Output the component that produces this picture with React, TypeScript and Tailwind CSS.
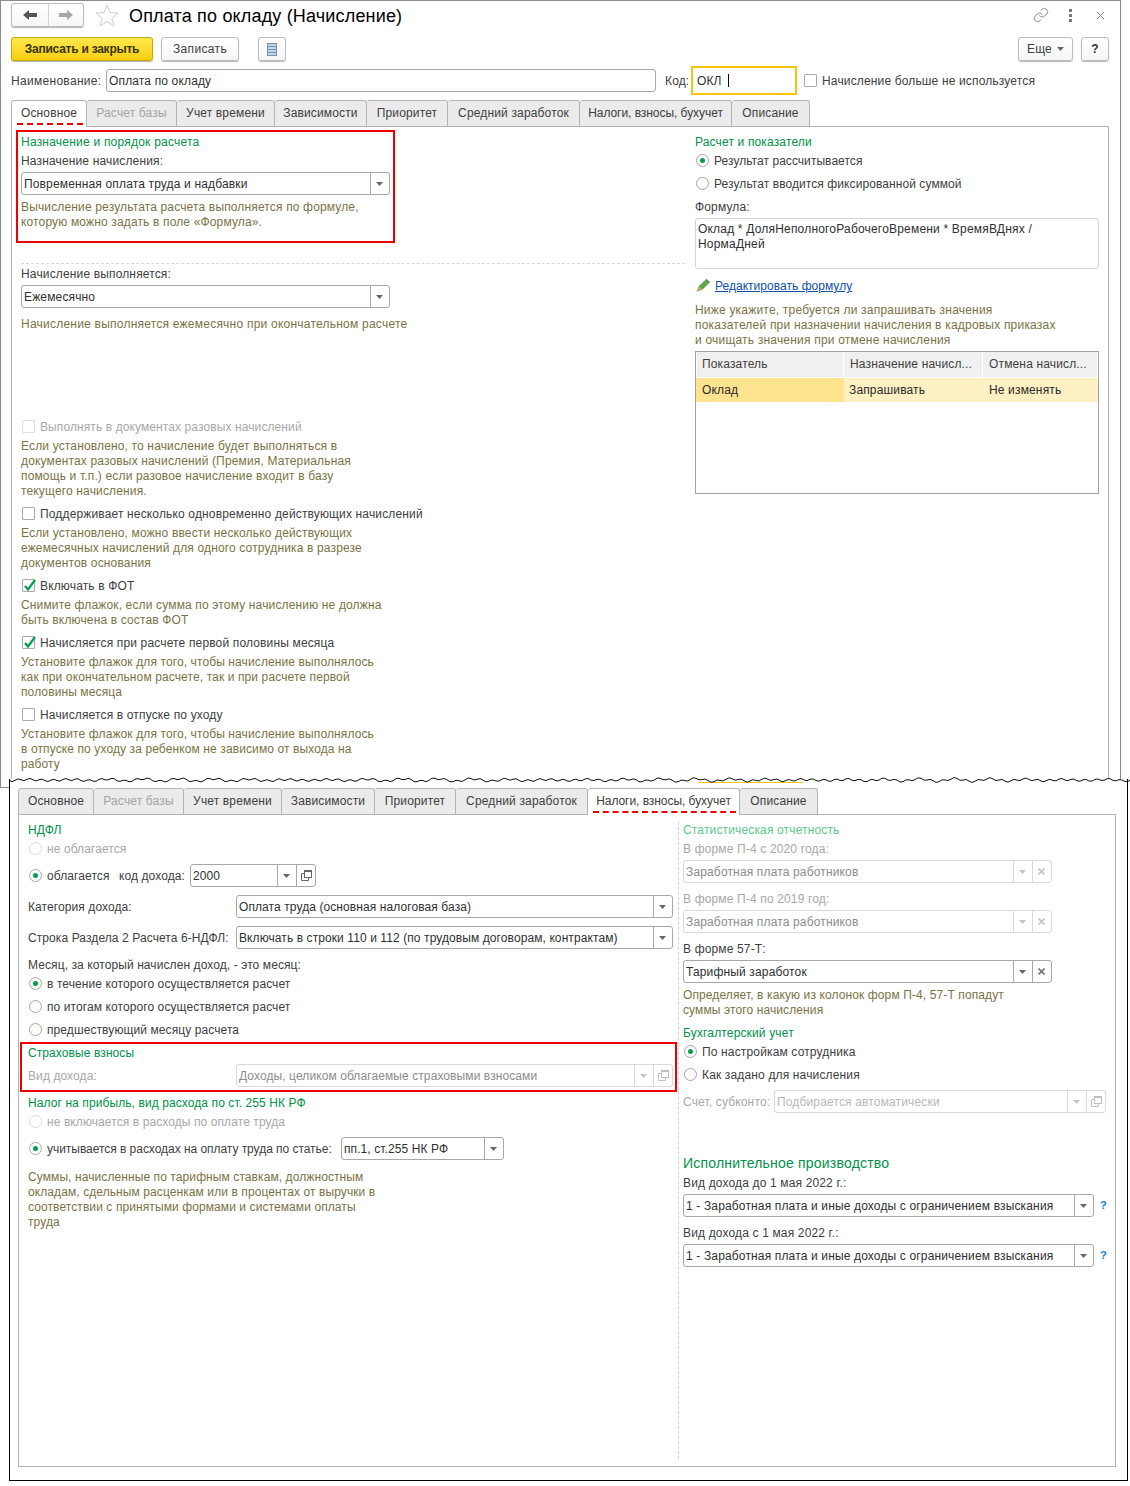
import { Link } from "lucide-react";
import type { ReactNode } from "react";

const TABS = [
  { label: "Основное", width: "w-[76px]", wideWidth: "w-[76px]", fit: "" },
  { label: "Расчет базы", width: "w-[90px]", wideWidth: "w-[90px]", fit: "", off: true },
  { label: "Учет времени", width: "w-[98px]", wideWidth: "w-[98px]", fit: "" },
  { label: "Зависимости", width: "w-[92px]", wideWidth: "w-[93px]", fit: "" },
  { label: "Приоритет", width: "w-[81px]", wideWidth: "w-[81px]", fit: "" },
  { label: "Средний заработок", width: "w-[132px]", wideWidth: "w-[132px]", fit: "" },
  { label: "Налоги, взносы, бухучет", width: "w-[152px]", wideWidth: "w-[152px]", fit: "tracking-[-0.05px]" },
  { label: "Описание", width: "w-[78px]", wideWidth: "w-[78px]", fit: "" }
];

function wavePath() {
  let d = "M0 3";
  for (let x = 3; x <= 1122; x += 3) {
    const y = 3 + Math.sin(x * 0.53) * 1.1 + Math.sin(x * 0.17 + 1) * 0.9 + Math.sin(x * 1.9) * 0.5;
    d += ` L${x} ${y.toFixed(1)}`;
  }
  return d;
}

function Tabs({ active, row }: { active: number; row: "top" | "bottom" }) {
  return (
    <div className="relative z-10 -mb-px flex h-[27px]">
      {TABS.map((tab, i) => (
        <div
          key={tab.label}
          className={`relative flex h-[27px] items-center justify-center rounded-t-[3px] border border-l-0 border-[#b4b4b4] first:border-l ${
            row === "top" ? tab.width : tab.wideWidth
          } ${i === active ? "border-b-0 bg-white pb-px" : "bg-[#ebebeb]"} ${tab.off ? "text-[#a3a3a3]" : ""} ${tab.fit}`}
        >
          {tab.label}
          {i === active ? (
            <span className="absolute left-[5px] right-[3px] top-[22px] border-t-2 border-dashed border-[#f00000]" />
          ) : null}
        </div>
      ))}
    </div>
  );
}

function Label({ children, className = "" }: { children: ReactNode; className?: string }) {
  return <div className={`translate-y-px ${className}`}>{children}</div>;
}

function Heading({ children, light }: { children: ReactNode; light?: boolean }) {
  return <div className={`h-[15px] translate-y-px ${light ? "text-[#5cc98b]" : "text-[#00914a]"}`}>{children}</div>;
}

function Hint({ children, className = "mt-1" }: { children: ReactNode; className?: string }) {
  return <div className={`translate-y-px text-[#7b7345] ${className}`}>{children}</div>;
}

function Radio({ on, off, label, className = "mt-2" }: { on?: boolean; off?: boolean; label?: string; className?: string }) {
  return (
    <div className={`flex h-[15px] items-center ${className} ${off ? "text-[#a8a8a8]" : ""}`}>
      <span
        className={`ml-px mr-[5px] flex size-[13px] shrink-0 items-center justify-center rounded-full border bg-white ${
          off ? "border-[#dcdcdc]" : "border-[#a6a6a6]"
        }`}
      >
        {on ? <span className="size-[5px] rounded-full bg-[#00a04f]" /> : null}
      </span>
      <span className="translate-y-px">{label}</span>
    </div>
  );
}

function Check({ on, off, label, className = "mt-2" }: { on?: boolean; off?: boolean; label: string; className?: string }) {
  return (
    <div className={`flex h-[15px] items-center ${className} ${off ? "text-[#a8a8a8]" : ""}`}>
      <span
        className={`ml-px mr-[5px] size-[13px] shrink-0 rounded-[1px] border bg-white ${
          off ? "border-[#dedede]" : "border-[#ababab]"
        }`}
      >
        {on ? (
          <svg width="13" height="13" viewBox="0 0 13 13" className="overflow-visible">
            <path d="M2 6 L5 9.5 L12 0" fill="none" stroke="#00a04f" strokeWidth="2.2" />
          </svg>
        ) : null}
      </span>
      <span className="translate-y-px">{label}</span>
    </div>
  );
}

function Caret({ off }: { off?: boolean }) {
  return (
    <svg width="7" height="4" viewBox="0 0 7 4">
      <path d="M0 0 H7 L3.5 4 Z" fill={off ? "#c4c4c4" : "#666"} />
    </svg>
  );
}

function OpenIcon({ off }: { off?: boolean }) {
  const c = off ? "#c0c0c0" : "#666";
  return (
    <svg width="11" height="11" viewBox="0 0 11 11" fill="none">
      <path d="M0.5 3.5 H3 M0.5 3.5 V10.5 H7.5 V8" stroke={c} />
      <rect x="3.5" y="0.5" width="7" height="7" stroke={c} />
      <path d="M3.5 1.5 H10.5" stroke={c} />
    </svg>
  );
}

function CrossIcon({ off }: { off?: boolean }) {
  return (
    <svg width="7" height="7" viewBox="0 0 7 7">
      <path d="M0.5 0.5 L6.5 6.5 M6.5 0.5 L0.5 6.5" stroke={off ? "#c4c4c4" : "#777"} strokeWidth="1.6" />
    </svg>
  );
}

function Select({
  text,
  width,
  extra,
  off,
  faint,
  className = ""
}: {
  text: string;
  width: string;
  extra?: "open" | "clear";
  off?: boolean;
  faint?: boolean;
  className?: string;
}) {
  const line = off ? "border-[#dadada]" : "border-[#a8a8a8]";
  return (
    <div className={`flex h-[23px] shrink-0 rounded-[3px] border bg-white ${width} ${line} ${className}`}>
      <div
        className={`min-w-0 flex-1 translate-y-px self-center overflow-hidden pl-[2px] whitespace-nowrap ${
          faint ? "text-[#b8b8b8]" : off ? "text-[#8c8c8c]" : "text-[#303030]"
        }`}
      >
        {text}
      </div>
      <div className={`flex w-[19px] items-center justify-center border-l pr-[2px] ${line}`}>
        <Caret off={off} />
      </div>
      {extra ? (
        <div className={`flex w-[19px] items-center justify-center border-l ${extra === "clear" ? "pr-[2px]" : ""} ${line}`}>
          {extra === "open" ? <OpenIcon off={off} /> : <CrossIcon off={off} />}
        </div>
      ) : null}
    </div>
  );
}

function Button({ children, width, className = "" }: { children: ReactNode; width: string; className?: string }) {
  return (
    <div
      className={`flex h-[24px] items-center justify-center rounded-[3px] border border-[#bcbcbc] bg-gradient-to-b from-white to-[#f6f6f6] shadow-[0_1px_1px_#b5b5b5] ${width} ${className}`}
    >
      {children}
    </div>
  );
}

function TopWindow() {
  return (
    <div className="h-[788px] w-[1121px] border border-[#8c8c8c]">
      <div className="flex h-[28px] items-center pl-[10px] pr-[12px]">
        <div className="flex h-[24px] w-[73px] rounded-[3px] border border-[#bcbcbc] bg-gradient-to-b from-white to-[#f6f6f6] shadow-[0_1px_1px_#b5b5b5]">
          <div className="flex w-[37px] items-center justify-center border-r border-[#d4d4d4]">
            <svg width="14" height="10" viewBox="0 0 14 10">
              <path d="M0 5 L6 0 V3 H14 V7 H6 V10 Z" fill="#555" />
            </svg>
          </div>
          <div className="flex flex-1 items-center justify-center">
            <svg width="14" height="10" viewBox="0 0 14 10">
              <path d="M14 5 L8 0 V3 H0 V7 H8 V10 Z" fill="#a6a6a6" />
            </svg>
          </div>
        </div>
        <svg width="24" height="23" viewBox="0 0 24 23" className="ml-[11px]">
          <path
            d="M12 1 L15 8.6 L23 9 L16.8 14.2 L18.9 22 L12 17.6 L5.1 22 L7.2 14.2 L1 9 L9 8.6 Z"
            fill="none"
            stroke="#c8ced4"
          />
        </svg>
        <div className="ml-[10px] translate-y-px whitespace-nowrap text-[18px] leading-[22px] tracking-[0.17px] text-black">
          Оплата по окладу (Начисление)
        </div>
        <Link size={16} strokeWidth={1.3} color="#7a7a7a" className="ml-auto" />
        <div className="ml-[20px] flex flex-col gap-[2px]">
          <span className="size-[3px] bg-[#777]" />
          <span className="size-[3px] bg-[#777]" />
          <span className="size-[3px] bg-[#777]" />
        </div>
        <svg width="9" height="9" viewBox="0 0 9 9" className="ml-[24px] mr-[3px]">
          <path d="M1 1 L8 8 M8 1 L1 8" stroke="#8c8c8c" />
        </svg>
      </div>

      <div className="mt-[8px] flex pl-[10px] pr-[11px]">
        <div className="flex h-[24px] w-[142px] items-center justify-center rounded-[3px] border border-[#c4a800] bg-gradient-to-b from-[#ffe84a] to-[#f8cf00] font-bold tracking-[-0.25px] text-[#3a3300] shadow-[0_1px_1px_#b5b5b5]">
          Записать и закрыть
        </div>
        <Button width="w-[78px]" className="ml-[8px] tracking-[0.35px]">
          Записать
        </Button>
        <Button width="w-[28px]" className="ml-[19px]">
          <svg width="10" height="13" viewBox="0 0 10 13">
            <rect x="0.5" y="0.5" width="9" height="12" fill="#c3d6e8" stroke="#7795b2" />
            <path d="M1 3.5 H9 M1 6.5 H9 M1 9.5 H9" stroke="#7795b2" />
          </svg>
        </Button>
        <Button width="w-[55px]" className="ml-auto gap-[5px]">
          Еще
          <Caret />
        </Button>
        <Button width="w-[28px]" className="ml-[8px] font-bold text-[#333]">
          ?
        </Button>
      </div>

      <div className="mt-[5px] flex h-[29px] items-center pl-[10px]">
        <Label className="w-[95px] tracking-[0.3px]">Наименование:</Label>
        <div className="flex h-[23px] w-[550px] items-center rounded-[3px] border border-[#a8a8a8] pl-[2px] text-[#303030]">
          <span className="translate-y-px">Оплата по окладу</span>
        </div>
        <Label className="ml-[9px] w-[26px]">Код:</Label>
        <div className="flex h-[29px] w-[106px] items-center border-2 border-[#fcc30e] pl-[4px] text-[#303030]">
          <span className="translate-y-px">ОКЛ</span>
          <span className="ml-[6px] h-[13px] w-px bg-black" />
        </div>
        <Check label="Начисление больше не используется" className="ml-[6px]" />
      </div>

      <div className="mt-[5px] pl-[10px]">
        <Tabs active={0} row="top" />
        <div className="flex h-[690px] w-[1098px] border border-[#b4b4b4] pl-[9px]">
          <div className="w-[664px]">
            <div className="mt-[3px] -ml-[5px] h-[113px] w-[379px] border-2 border-[#f00000] pl-[3px] pt-[2px]">
              <div className="tracking-[0.22px]">
                <Heading>Назначение и порядок расчета</Heading>
              </div>
              <Label className="mt-1">Назначение начисления:</Label>
              <Select text="Повременная оплата труда и надбавки" width="w-[369px]" className="mt-1" />
              <Hint>
                Вычисление результата расчета выполняется по формуле,
                <br />
                которую можно задать в поле «Формула».
              </Hint>
            </div>
            <div className="mt-[20px] border-t border-dashed border-[#d8d8d8]" />
            <Label className="mt-[2px]">Начисление выполняется:</Label>
            <Select text="Ежемесячно" width="w-[369px]" className="mt-1" />
            <Hint className="mt-2 tracking-[0.23px]">Начисление выполняется ежемесячно при окончательном расчете</Hint>

            <Check off label="Выполнять в документах разовых начислений" className="mt-[88px] tracking-[0.1px]" />
            <Hint>
              Если установлено, то начисление будет выполняться в
              <br />
              документах разовых начислений (Премия, Материальная
              <br />
              помощь и т.п.) если разовое начисление входит в базу
              <br />
              текущего начисления.
            </Hint>
            <Check label="Поддерживает несколько одновременно действующих начислений" />
            <Hint>
              Если установлено, можно ввести несколько действующих
              <br />
              ежемесячных начислений для одного сотрудника в разрезе
              <br />
              документов основания
            </Hint>
            <Check on label="Включать в ФОТ" />
            <Hint>
              Снимите флажок, если сумма по этому начислению не должна
              <br />
              быть включена в состав ФОТ
            </Hint>
            <Check on label="Начисляется при расчете первой половины месяца" />
            <Hint className="mt-1 tracking-[0.11px]">
              Установите флажок для того, чтобы начисление выполнялось
              <br />
              как при окончательном расчете, так и при расчете первой
              <br />
              половины месяца
            </Hint>
            <Check label="Начисляется в отпуске по уходу" />
            <Hint className="mt-1 tracking-[0.11px]">
              Установите флажок для того, чтобы начисление выполнялось
              <br />в отпуске по уходу за ребенком не зависимо от выхода на
              <br />
              работу
            </Hint>
          </div>

          <div className="ml-[10px] w-[404px] pt-[7px]">
            <Heading>Расчет и показатели</Heading>
            <Radio on label="Результат рассчитывается" className="mt-1 tracking-[0.05px]" />
            <Radio label="Результат вводится фиксированной суммой" className="mt-2 tracking-[0.08px]" />
            <Label className="mt-2">Формула:</Label>
            <div className="mt-1 h-[51px] rounded-[3px] border border-[#d4d4d4] pl-[2px] pt-[3px] tracking-[0.19px] text-[#303030]">
              Оклад * ДоляНеполногоРабочегоВремени * ВремяВДнях /
              <br />
              НормаДней
            </div>
            <div className="mt-[9px] flex h-[15px] items-center">
              <svg width="14" height="13" viewBox="0 0 14 13" className="ml-px mr-[5px]">
                <path d="M2.5 7.5 L9.5 0.8 L13 4.2 L6 11 Z" fill="#5aa84a" />
                <path d="M9.5 0.8 L10.5 0 L14 3.2 L13 4.2 Z" fill="#4d6b58" />
                <path d="M2.5 7.5 L6 11 L0.5 12.8 Z" fill="#c79a6a" />
              </svg>
              <span className="translate-y-px tracking-[0.03px] text-[#0f4fa8] underline">Редактировать формулу</span>
            </div>
            <Hint className="mt-[9px] tracking-[0.2px]">
              Ниже укажите, требуется ли запрашивать значения
              <br />
              показателей при назначении начисления в кадровых приказах
              <br />и очищать значения при отмене начисления
            </Hint>
            <div className="mt-1 h-[143px] border border-[#a3a3a3] px-px">
              <div className="grid h-[25px] grid-cols-[146px_138px_1fr] gap-x-px">
                <div className="flex items-center bg-[#f0f0f0] pl-[5px]">Показатель</div>
                <div className="flex items-center bg-[#f0f0f0] pl-[6px]">Назначение начисл...</div>
                <div className="flex items-center bg-[#f0f0f0] pl-[6px]">Отмена начисл...</div>
              </div>
              <div className="-mx-px mt-px grid h-[24px] grid-cols-[148px_139px_1fr] text-[#2b2b2b]">
                <div className="flex items-center bg-[#ffe38f] pl-[6px]">Оклад</div>
                <div className="flex items-center bg-[#fdf1c3] pl-[5px]">Запрашивать</div>
                <div className="flex items-center bg-[#fdf1c3] pl-[6px]">Не изменять</div>
              </div>
            </div>
          </div>
        </div>
      </div>
    </div>
  );
}

function BottomWindow() {
  return (
    <div className="relative -mt-[9px] ml-[9px] h-[702px] w-[1119px] border-x border-b border-black bg-white pl-[8px] pt-[9px]">
      <svg width="1121" height="8" viewBox="0 0 1121 8" className="absolute -left-px -top-[2px]">
        <path d="M689 5.5 H794" stroke="#fcc30e" />
        <path d={wavePath()} fill="none" stroke="#111" />
      </svg>
      <Tabs active={6} row="bottom" />
      <div className="flex h-[653px] w-[1098px] border border-[#b4b4b4] pl-[9px]">
        <div className="w-[650px] pt-[7px] tracking-[0.09px]">
          <Heading>НДФЛ</Heading>
          <Radio off label="не облагается" className="mt-1" />
          <div className="mt-2 flex h-[23px] items-center">
            <div className="w-[91px]">
              <Radio on label="облагается" className="" />
            </div>
            <Label className="w-[71px]">код дохода:</Label>
            <Select text="2000" width="w-[126px]" extra="open" />
          </div>
          <div className="mt-2 flex h-[23px] items-center">
            <Label className="w-[208px] whitespace-nowrap">Категория дохода:</Label>
            <Select text="Оплата труда (основная налоговая база)" width="w-[437px]" />
          </div>
          <div className="mt-2 flex h-[23px] items-center">
            <Label className="w-[208px] whitespace-nowrap">Строка Раздела 2 Расчета 6-НДФЛ:</Label>
            <Select text="Включать в строки 110 и 112 (по трудовым договорам, контрактам)" width="w-[437px]" />
          </div>
          <Label className="mt-2">Месяц, за который начислен доход, - это месяц:</Label>
          <Radio on label="в течение которого осуществляется расчет" className="mt-1" />
          <Radio label="по итогам которого осуществляется расчет" />
          <Radio label="предшествующий месяцу расчета" />

          <div className="mt-[5px] -ml-[8px] h-[50px] w-[657px] border-2 border-[#f00000] pl-[6px] pt-px">
            <Heading>Страховые взносы</Heading>
            <div className="mt-1 flex h-[23px] items-center">
              <Label className="w-[208px] text-[#a8a8a8]">Вид дохода:</Label>
              <Select off text="Доходы, целиком облагаемые страховыми взносами" width="w-[437px]" extra="open" />
            </div>
          </div>

          <div className="mt-[3px]">
            <Heading>Налог на прибыль, вид расхода по ст. 255 НК РФ</Heading>
          </div>
          <Radio off label="не включается в расходы по оплате труда" className="mt-1" />
          <div className="mt-2 flex h-[23px] items-center">
            <div className="w-[313px] tracking-[-0.04px]">
              <Radio on label="учитывается в расходах на оплату труда по статье:" className="" />
            </div>
            <Select text="пп.1, ст.255 НК РФ" width="w-[163px]" />
          </div>
          <Hint className="mt-[9px]">
            Суммы, начисленные по тарифным ставкам, должностным
            <br />
            окладам, сдельным расценкам или в процентах от выручки в
            <br />
            соответствии с принятыми формами и системами оплаты
            <br />
            труда
          </Hint>
        </div>

        <div className="my-[7px] border-l border-dashed border-[#d0d0d0]" />

        <div className="ml-[4px] w-[425px] pt-[7px]">
          <Heading light>Статистическая отчетность</Heading>
          <Label className="mt-1 text-[#a8a8a8]">В форме П-4 с 2020 года:</Label>
          <Select off text="Заработная плата работников" width="w-[369px]" extra="clear" className="mt-1" />
          <Label className="mt-2 text-[#a8a8a8]">В форме П-4 по 2019 год:</Label>
          <Select off text="Заработная плата работников" width="w-[369px]" extra="clear" className="mt-1" />
          <Label className="mt-2">В форме 57-Т:</Label>
          <Select text="Тарифный заработок" width="w-[369px]" extra="clear" className="mt-1" />
          <Hint className="mt-1 tracking-[0.11px]">
            Определяет, в какую из колонок форм П-4, 57-Т попадут
            <br />
            суммы этого начисления
          </Hint>
          <div className="mt-2">
            <Heading>Бухгалтерский учет</Heading>
          </div>
          <Radio on label="По настройкам сотрудника" className="mt-1" />
          <Radio label="Как задано для начисления" />
          <div className="mt-2 flex h-[23px] items-center">
            <Label className="w-[91px] text-[#a8a8a8]">Счет, субконто:</Label>
            <Select off faint text="Подбирается автоматически" width="w-[332px]" extra="open" />
          </div>
          <div className="mt-[42px] h-[16px] text-[14px] leading-[16px] tracking-[0.2px] text-[#00914a]">
            Исполнительное производство
          </div>
          <Label className="mt-1">Вид дохода до 1 мая 2022 г.:</Label>
          <div className="mt-1 flex items-center">
            <Select text="1 - Заработная плата и иные доходы с ограничением взыскания" width="w-[411px]" />
            <span className="ml-[6px] text-[11px] font-bold text-[#0a84d0]">?</span>
          </div>
          <Label className="mt-2">Вид дохода с 1 мая 2022 г.:</Label>
          <div className="mt-1 flex items-center">
            <Select text="1 - Заработная плата и иные доходы с ограничением взыскания" width="w-[411px]" />
            <span className="ml-[6px] text-[11px] font-bold text-[#0a84d0]">?</span>
          </div>
        </div>
      </div>
    </div>
  );
}

export default function App() {
  return (
    <div className="h-[1486px] w-[1130px] overflow-hidden bg-white font-['Liberation_Sans',Arial,sans-serif] text-[12px] leading-[15px] tracking-[0.15px] whitespace-nowrap text-[#404040]">
      <TopWindow />
      <BottomWindow />
    </div>
  );
}
